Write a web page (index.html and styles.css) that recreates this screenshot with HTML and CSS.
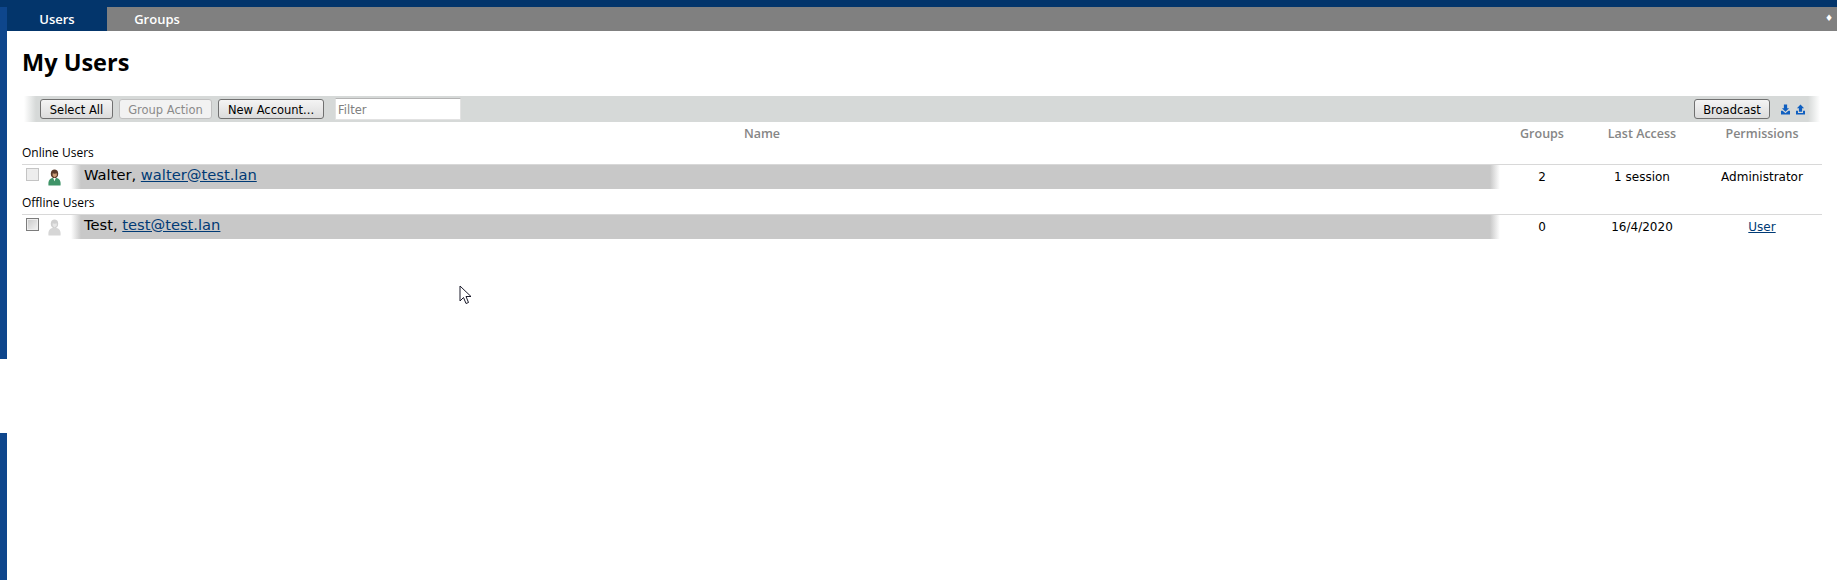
FILE: index.html
```html
<!DOCTYPE html>
<html lang="en">
<head>
<meta charset="utf-8">
<title>My Users</title>
<link rel="stylesheet" href="styles.css">
</head>
<body>
<div class="topbar"></div>
<div class="frame">
  <div class="edge">
    <div class="edge-upper"></div>
    <div class="edge-lower"></div>
  </div>
  <div class="main">
    <nav class="tabs">
      <a class="tab tab-active">Users</a>
      <a class="tab">Groups</a>
      <span class="tab-pin">♦</span>
    </nav>
    <div class="content">
      <h1 class="title">My Users</h1>
      <div class="toolbar">
        <button class="btn btn-select">Select All</button>
        <button class="btn btn-group" disabled>Group Action</button>
        <button class="btn btn-new">New Account...</button>
        <input class="filter" type="text" placeholder="Filter">
        <span class="spacer"></span>
        <button class="btn btn-broadcast">Broadcast</button>
        <span class="tool-icons">
          <svg class="tool-icon" viewBox="0 0 10 11"><path d="M3.200 0h3.600v4H9L5 8 1 4h2.200zM0 7h1.800L5 9.800 8.200 7H10v4H0z"/></svg>
          <svg class="tool-icon" viewBox="0 0 10 11"><path d="M5 0l4 4.200H6.800V8H3.200V4.200H1zM0 7h2.200v2.500h5.600V7H10v4H0z"/></svg>
        </span>
      </div>
      <div class="row head">
        <div class="col-name">Name</div>
        <div class="col-num">Groups</div>
        <div class="col-access">Last Access</div>
        <div class="col-perm">Permissions</div>
      </div>
      <div class="section">Online Users</div>
      <div class="row user">
        <div class="user-main">
          <input class="check check-online" type="checkbox">
          <svg class="avatar" viewBox="0 0 14 18"><path d="M3 5C3 2 4.800.5 7 .5S11 2 11 5 9.200 10 7 10 3 8 3 5z" fill="#5b3b2a"/><path d="M5 4.500c1.500.5 3 .5 4.500 0L9.500 7 7 9 5 7z" fill="#c99b76"/><path d="M.5 17.500C0 13 1.500 10 5 9.500h4c3.500.5 5 3.500 4.500 8z" fill="#3f9468"/><path d="M5.500 9.500h3L7 13z" fill="#fff"/></svg>
          <div class="name-bar"><span>Walter, <a class="link">walter@test.lan</a></span></div>
        </div>
        <div class="col-num">2</div>
        <div class="col-access">1 session</div>
        <div class="col-perm">Administrator</div>
      </div>
      <div class="section">Offline Users</div>
      <div class="row user">
        <div class="user-main">
          <input class="check" type="checkbox">
          <svg class="avatar" viewBox="0 0 14 18"><path d="M3 5C3 2 4.800.5 7 .5S11 2 11 5 9.200 10 7 10 3 8 3 5z" fill="#cfcfcf"/><path d="M5 4.500c1.500.5 3 .5 4.500 0L9.500 7 7 9 5 7z" fill="#e6e6e6"/><path d="M.5 17.500C0 13 1.500 10 5 9.500h4c3.500.5 5 3.500 4.500 8z" fill="#d6d6d6"/></svg>
          <div class="name-bar"><span>Test, <a class="link">test@test.lan</a></span></div>
        </div>
        <div class="col-num">0</div>
        <div class="col-access">16/4/2020</div>
        <div class="col-perm"><a class="link">User</a></div>
      </div>
    </div>
  </div>
</div>
<svg class="cursor" viewBox="0 0 13 20"><path d="M1 1v15l3.500-3.500 2.500 6 2.500-1-2.500-6H12z" fill="#fff" stroke="#1a1a2a" stroke-width="1"/></svg>
</body>
</html>
```
FILE: styles.css
```css
* { box-sizing: border-box; }
html, body { margin: 0; height: 100%; background: #fff; overflow: hidden; }
body { font-family: "DejaVu Sans", Verdana, sans-serif; font-size: 12px; color: #000; }

.topbar { height: 7px; background: #03356b; }
.frame { display: flex; height: 573px; }
.edge { width: 7px; display: flex; flex-direction: column; flex: none; }
.edge-upper { height: 352px; background: #0e468c; }
.edge-lower { margin-top: 74px; flex: 1; background: #0e468c; }
.main { flex: 1; min-width: 0; }

.tabs { display: flex; height: 24px; background: #808080; align-items: stretch; position: relative; }
.tab { width: 100px; display: flex; align-items: center; justify-content: center; color: #fff; font-family: "Open Sans", sans-serif; font-weight: 600; font-size: 13px; }
.tab-active { background: #03356b; }
.tab-pin { position: absolute; right: 4px; top: 6px; font-size: 9px; color: #fff; }

.content { padding: 0 15px; }
.title { margin: 0; height: 65px; padding-top: 14px; font-family: "Open Sans", sans-serif; font-size: 23.5px; line-height: 34px; font-weight: 700; }

.toolbar { height: 26px; margin: 0 2px 0 2px; display: flex; align-items: center; padding-left: 16px; background: linear-gradient(to right, #fff 0, #d6d9d8 12px, #d6d9d8 calc(100% - 12px), #fff 100%); }
.btn { height: 20px; padding: 1px 0 0; font-family: "DejaVu Sans", sans-serif; font-size: 11.5px; color: #000; border: 1px solid #707070; border-radius: 3px; background: linear-gradient(#f4f4f4, #dcdcdc); }
.btn-select { width: 73px; }
.btn-group { width: 93px; margin-left: 6px; color: #8a8a8a; background: #f2f2f2; border-color: #c0c0c0; }
.btn-new { width: 106px; margin-left: 6px; }
.filter { width: 126px; height: 22px; margin-left: 11px; padding: 1px 2px 0; border: 1px solid #e2e2e2; border-top-color: #b4b4b4; background: #fff; font-family: "DejaVu Sans", sans-serif; font-size: 11.5px; }
.filter::placeholder { color: #808080; opacity: 1; }
.spacer { flex: 1; }
.btn-broadcast { width: 76px; }
.tool-icons { display: flex; gap: 6px; margin: 0 15px 0 11px; }
.tool-icon { width: 9px; height: 11px; fill: #0f5fc0; }

.row { display: flex; align-items: center; }
.head { height: 17px; padding-top: 3px; align-items: flex-start; color: #868686; font-weight: 600; font-family: "Open Sans", sans-serif; font-size: 12.5px; line-height: 17px; }
.col-name { flex: 1; text-align: center; min-width: 0; }
.col-num { width: 80px; text-align: center; }
.col-access { width: 120px; text-align: center; }
.col-perm { width: 120px; text-align: center; }

.section { height: 25px; display: flex; align-items: flex-end; padding-bottom: 4px; font-family: "Open Sans", sans-serif; font-size: 12px; line-height: 14px; }
.user { height: 25px; border-top: 1px solid #d8d8d8; }
.user-main { flex: 1; display: flex; align-items: center; min-width: 0; height: 100%; }
.check { appearance: none; width: 13px; height: 13px; margin: 0 0 5px 4px; flex: none; border: 1px solid #7c7c7c; background: linear-gradient(135deg, #c8c8c8, #f4f4f4); box-shadow: inset 0 0 0 1px #eee; }
.check-online { border-color: #c4c4c4; background: #ededed; box-shadow: none; }
.avatar { width: 13px; height: 17px; margin-left: 9px; flex: none; }
.name-bar { flex: 1; height: 100%; margin: 0 2px 0 10px; padding: 0 0 6px 13px; display: flex; align-items: center; font-size: 14.7px; background: linear-gradient(to right, #fff 0, #c8c8c8 10px, #c8c8c8 calc(100% - 10px), #fff 100%); }
.link { color: #003a75; text-decoration: underline; }

.cursor { position: absolute; left: 459px; top: 285px; width: 13px; height: 20px; }
```
